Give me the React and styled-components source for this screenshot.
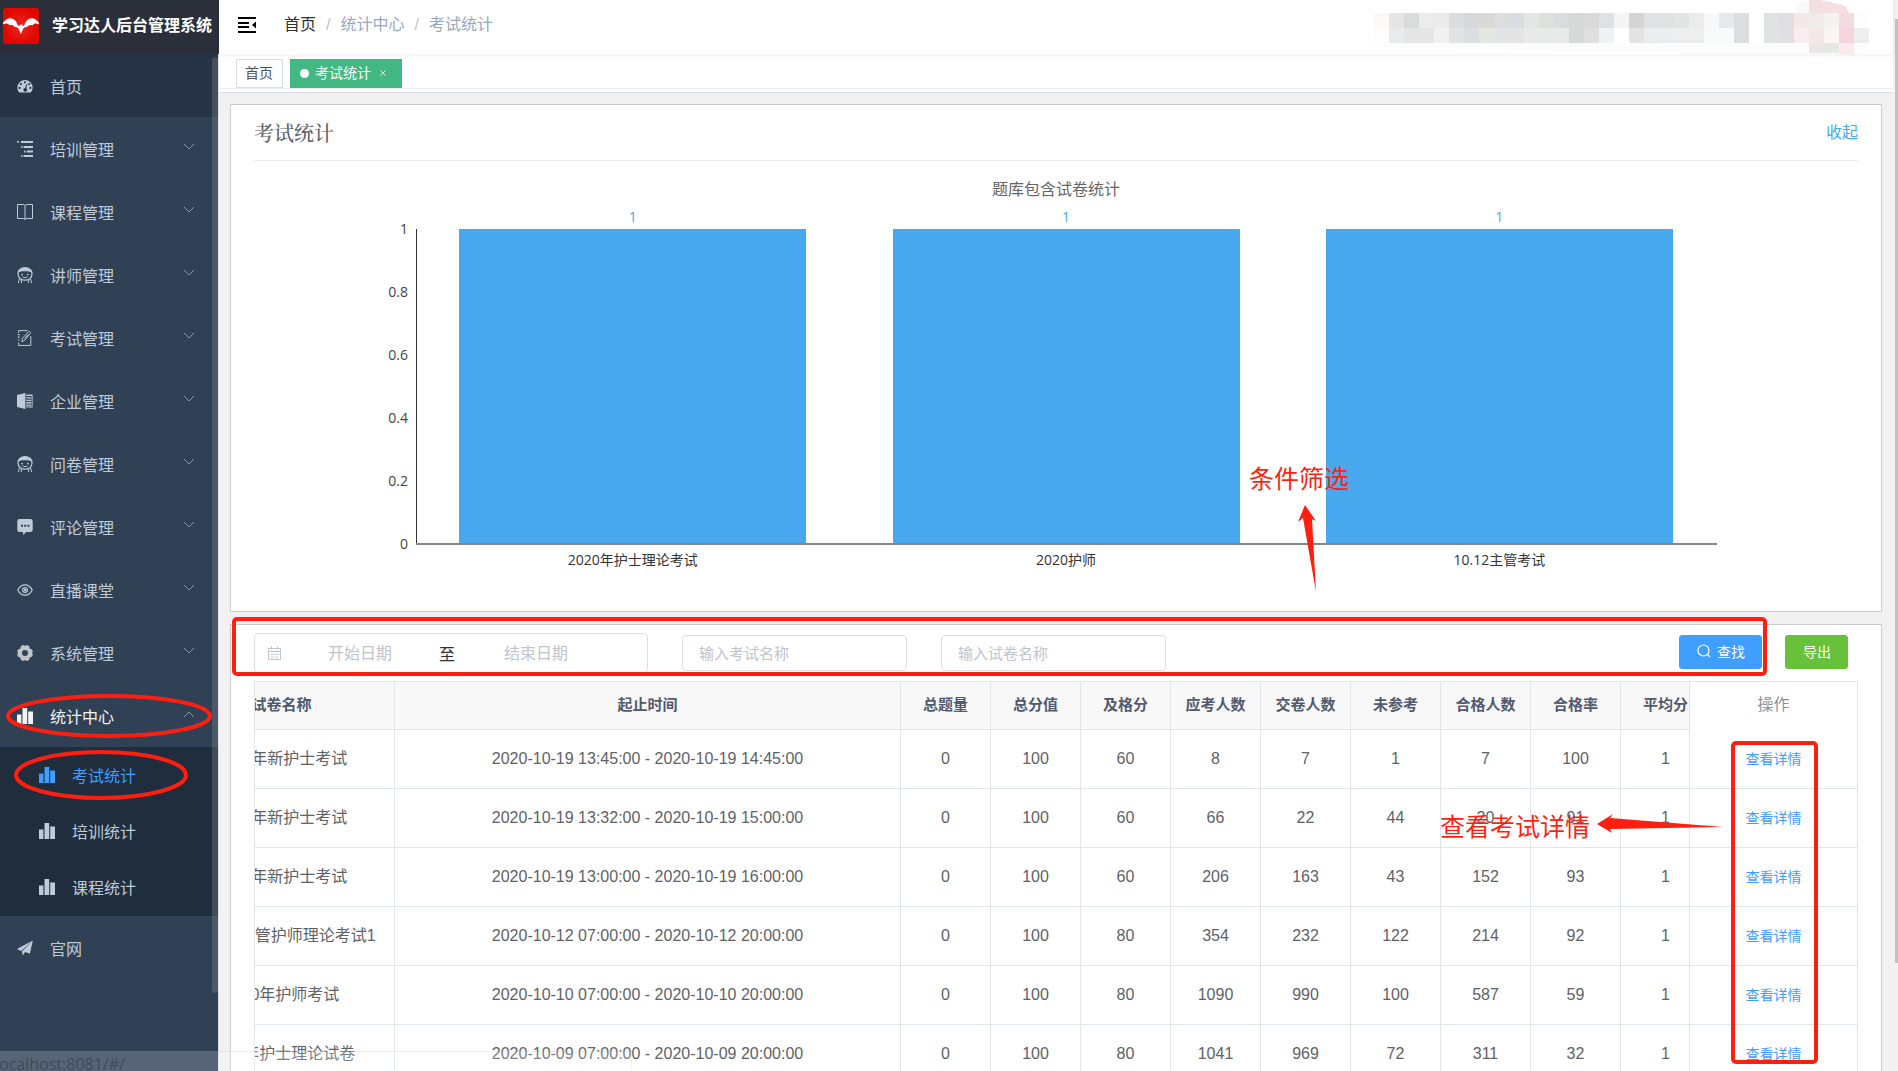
import React, { useLayoutEffect, useRef, useState } from 'react';
import styled, { createGlobalStyle, css } from 'styled-components';

// Global styles
const GlobalStyle = createGlobalStyle`
    * {
        box-sizing: border-box;
    }

    body {
        margin: 0;
        overflow: hidden;
        font-family: 'Liberation Sans', 'Noto Sans CJK SC', sans-serif;
        font-size: 16px;
        color: #606266;
    }

    button, input {
        font-family: inherit;
    }

    a {
        text-decoration: none;
    }
`;

/* --- Layout --- */
const Shell = styled.div`
    position: relative;
    display: flex;
    height: 100vh;
    overflow: hidden;
    background: #f1f1f1;
`;

const Sidebar = styled.aside`
    display: flex;
    flex-direction: column;
    flex: 0 0 219px;
`;

const Main = styled.main`
    flex: 1;
    min-width: 0;
`;

const PageScroll = styled.div`
    flex: 0 0 5px;
    padding: 19px 0 0 2px;
    background: #f1f1f1;
`;

const PageThumb = styled.div`
    height: calc(100% - 108px);
    background: #c1c1c1;
`;

/* --- Sidebar --- */
const Brand = styled.a`
    display: flex;
    align-items: center;
    gap: 13px;
    height: 54px;
    padding: 0 0 3px 3px;
    background: #2b2f3a;
    color: #fff;
    font-size: 16px;
    font-weight: 700;
    line-height: 16px;
    white-space: nowrap;
`;

const Menu = styled.nav`
    position: relative;
    flex: 1;
    min-height: 0;
    overflow: hidden;
    border-right: 1px solid #e0e0e0;
    background: #304156;
`;

const MenuThumb = styled.div`
    position: absolute;
    top: 3px;
    right: 0;
    width: 6px;
    height: 92%;
    border-radius: 3px;
    background: rgba(144, 147, 153, 0.3);
`;

const itemStyle = css`
    display: flex;
    align-items: center;
    gap: 17px;
    width: 100%;
    height: 63px;
    padding: 0 23px 0 17px;
    border: none;
    background: ${props => (props.$dark ? '#263445' : 'transparent')};
    color: ${props => (props.$open ? '#f4f4f5' : '#bfcbd9')};
    font-size: 16px;
    text-align: left;
    cursor: pointer;
`;

const MenuLink = styled.a`
    ${itemStyle}
`;

const MenuButton = styled.button`
    ${itemStyle}
`;

const MenuText = styled.span`
    flex: 1;
`;

const SubMenu = styled.div`
    padding-bottom: 1px;
    background: #1f2d3d;
`;

const SubLink = styled.a`
    display: flex;
    align-items: center;
    gap: 17px;
    height: 56px;
    padding-left: 39px;
    color: ${props => (props.$active ? '#409eff' : '#bfcbd9')};
    font-size: 16px;
`;

/* --- Navbar --- */
const Navbar = styled.header`
    position: relative;
    display: flex;
    align-items: center;
    height: 54px;
    padding: 0 22px 4px 19px;
    background: #fff;
    box-shadow: 0 1px 4px rgba(0, 21, 41, 0.08);
`;

const FoldButton = styled.button`
    display: flex;
    padding: 0;
    border: none;
    background: none;
    cursor: pointer;
`;

const Breadcrumb = styled.nav`
    display: flex;
    align-items: center;
    flex: 1;
    gap: 10px;
    margin-left: 28px;
    font-size: 16px;
    line-height: 18px;
    color: #97a8be;
`;

const CrumbLink = styled.a`
    color: #303133;
`;

const Slash = styled.span`
    color: #c0c4cc;
`;

const UserArea = styled.div`
    display: flex;
    align-self: flex-start;
`;

/* --- Tags --- */
const TagsWrap = styled.div`
    padding-bottom: 3px;
    border-bottom: 1px solid #d8dce5;
    background: #fff;
`;

const Tags = styled.div`
    display: flex;
    gap: 7px;
    height: 35px;
    padding: 5px 17px 0;
    border-bottom: 1px solid #eee;
`;

const Tag = styled.a`
    display: flex;
    align-items: center;
    gap: 6px;
    height: 29px;
    padding: ${props => (props.$active ? '0 14px 1px 9px' : '0 9px 1px 8px')};
    border: 1px solid ${props => (props.$active ? '#42b983' : '#d8dce5')};
    background: ${props => (props.$active ? '#42b983' : '#fff')};
    color: ${props => (props.$active ? '#fff' : '#495060')};
    font-size: 14px;
    line-height: 14px;
`;

const Dot = styled.span`
    width: 9px;
    height: 9px;
    border-radius: 50%;
    background: #fff;
`;

const TagClose = styled.span`
    display: flex;
    margin-left: 2px;
`;

/* --- Cards --- */
const Content = styled.div`
    display: flex;
    flex-direction: column;
    gap: 12px;
    padding: 11px;
`;

const Card = styled.section`
    padding: 0 23px;
    border: 1px solid #ccc;
    background: #fff;
`;

const CardHeader = styled.div`
    display: flex;
    align-items: center;
    justify-content: space-between;
    height: 56px;
    border-bottom: 1px solid #ebebeb;
`;

const CardTitle = styled.h2`
    margin: 0;
    font-family: 'Liberation Serif', 'Noto Serif CJK SC', 'Noto Sans CJK SC', serif;
    font-size: 20px;
    font-weight: 500;
    color: #606266;
`;

const TextButton = styled.button`
    padding: 0;
    border: none;
    background: none;
    color: #48a8ee;
    font-size: 16px;
    line-height: 16px;
    cursor: pointer;
`;

const ChartSvg = styled.svg`
    display: block;
    width: 100%;
    font-family: 'Open Sans', 'Noto Sans CJK SC', sans-serif;
    font-size: 14px;
`;

/* --- Filters --- */
const Filters = styled.form`
    display: flex;
    align-items: center;
    height: 56px;
    padding-right: 10px;
`;

const DateRange = styled.div`
    display: flex;
    align-items: center;
    width: 394px;
    height: 40px;
    padding-left: 12px;
    border: 1px solid #dcdfe6;
    border-radius: 4px;
`;

const DateInput = styled.input`
    width: 154px;
    height: 38px;
    padding: 2px 0 0 2px;
    border: none;
    outline: none;
    background: none;
    font-size: 16px;
    text-align: center;

    &::placeholder {
        color: #c0c4cc;
    }
`;

const RangeSeparator = styled.span`
    width: 22px;
    color: #303133;
    font-size: 16px;
    text-align: center;
`;

const TextInput = styled.input`
    width: 225px;
    height: 36px;
    margin-left: 34px;
    padding: 0 16px;
    border: 1px solid #dcdfe6;
    border-radius: 4px;
    outline: none;
    font-size: 15px;

    &::placeholder {
        color: #c0c4cc;
    }
`;

const Actions = styled.div`
    display: flex;
    gap: 23px;
    margin-left: auto;
`;

const Button = styled.button`
    display: flex;
    align-items: center;
    gap: 6px;
    height: 34px;
    margin-bottom: 2px;
    padding: 0 16px 2px 17px;
    border: 1px solid ${props => props.$color};
    border-radius: 3px;
    background: ${props => props.$color};
    color: #fff;
    font-size: 14px;
    cursor: pointer;
`;

/* --- Table --- */
const TableWrap = styled.div`
    display: flex;
    margin-bottom: 20px;
    border-top: 1px solid #dfe6ec;
    border-left: 1px solid #dfe6ec;
`;

const TableScroll = styled.div`
    flex: 1;
    min-width: 0;
    overflow: hidden;
`;

const Table = styled.table`
    width: ${props => props.$width}px;
    table-layout: fixed;
    border-collapse: separate;
    border-spacing: 0;
    text-align: center;
`;

const FixedTable = styled(Table)`
    border-left: 1px solid #dfe6ec;
`;

const Th = styled.th`
    height: 48px;
    padding: 0 0 2px;
    border-right: 1px solid #dfe6ec;
    border-bottom: 1px solid #dfe6ec;
    background: #f8f8f9;
    color: #515a6e;
    font-size: 15px;
    font-weight: 700;
    line-height: 20px;
`;

const FixedTh = styled(Th)`
    border-bottom-color: #fff;
    background: #fff;
    color: #909399;
    font-size: 16px;
    font-weight: 400;
`;

const Td = styled.td`
    height: 59px;
    padding: 0;
    border-right: 1px solid #dfe6ec;
    border-bottom: 1px solid #dfe6ec;
    color: #606266;
    font-size: 16px;
    line-height: 20px;
    white-space: nowrap;
`;

const DetailLink = styled.a`
    color: #409eff;
    font-size: 14px;
`;

/* --- Overlays --- */
const Marks = styled.svg`
    position: absolute;
    inset: 0;
    width: 100%;
    height: 100%;
    pointer-events: none;
    font-size: 25px;
`;

const StatusBubble = styled.div`
    position: absolute;
    left: 0;
    bottom: -8px;
    width: 632px;
    height: 28px;
    border-top: 1px solid rgba(120, 130, 140, 0.12);
    border-right: 1px solid rgba(120, 130, 140, 0.08);
    background: rgba(255, 255, 255, 0.19);
    color: #3f4b5c;
    font-family: 'Open Sans', sans-serif;
    font-size: 16px;
    line-height: 24px;
    text-indent: -5px;
    pointer-events: none;
`;

/* --- Iconos --- */
const Svg = ({ size = 16, children, ...rest }) => (
    <svg width={size} height={size} viewBox="0 0 16 16" fill="currentColor" aria-hidden="true" {...rest}>
        {children}
    </svg>
);

const DashboardIcon = () => (
    <Svg>
        <path
            fillRule="evenodd"
            d="M8 2a7.6 7.6 0 0 0-7.6 7.6c0 1.7.5 3.2 1.4 4.4.2.3.4.4.7.4h11c.3 0 .5-.1.7-.4a7.5 7.5 0 0 0 1.4-4.4A7.6 7.6 0 0 0 8 2Zm0 1.2a1.1 1.1 0 1 1 0 2.2 1.1 1.1 0 0 1 0-2.2ZM3.9 5a1.1 1.1 0 1 1 0 2.2A1.1 1.1 0 0 1 3.9 5Zm8.2 0a1.1 1.1 0 1 1 0 2.2 1.1 1.1 0 0 1 0-2.2ZM2.6 8.800a1.1 1.1 0 1 1 0 2.2 1.1 1.1 0 0 1 0-2.2Zm10.800 0a1.1 1.1 0 1 1 0 2.2 1.1 1.1 0 0 1 0-2.2ZM9.300 6.300l.9.3-.9 3.6a1.9 1.9 0 1 1-1.1-.3Z"
        />
    </Svg>
);

const TreeIcon = () => (
    <Svg>
        <path d="M0 0h2v1.600H0zM4 0h12v2H4zM4 5.200h1.600v1.600H4zM6.600 5h9.400v2H6.600zM7 9.800h1.600v1.600H7zM9.800 9.600H16v2H9.800zM4 14.200h1.600v1.600H4zM6.600 14H16v2H6.600z" />
    </Svg>
);

const BookIcon = () => (
    <Svg fill="none" stroke="currentColor" strokeWidth="1">
        <path d="M.5.500h5.700c1 0 1.800.6 1.800 1.400 0-.8.8-1.400 1.800-1.400h5.700v14H9.800c-1 0-1.800.4-1.800 1.100 0-.7-.8-1.100-1.800-1.100H.5ZM8 2v13.500" />
    </Svg>
);

const PeopleIcon = () => (
    <Svg fill="none" stroke="currentColor">
        <path d="M1 6.600C1 3 4 .6 8 .6s7 2.400 7 6c0 4.200-3 6.600-7 6.600S1 10.800 1 6.600Z" strokeWidth="1.200" />
        <path d="M1 5.800C1.600 2.600 4.400.8 8 .8s6.400 1.800 7 5c-1.600-1.100-4-1.500-7-1.500s-5.400.4-7 1.500Z" fill="currentColor" stroke="none" />
        <path d="M5.300 9.800c1.500 1 3.900 1 5.400 0M2.400 11.800 1.400 16M4.400 13v3M13.600 11.800l1 4.200M11.600 13v3" />
        <circle cx="5" cy="7.600" r=".9" fill="currentColor" stroke="none" />
        <circle cx="11" cy="7.600" r=".9" fill="currentColor" stroke="none" />
    </Svg>
);

const ExamIcon = () => (
    <Svg fill="none" stroke="currentColor">
        <path d="M1.600 3V.6h9M1.600 12.600v2.800h12.200V6" />
        <path d="M.8 4.600h1.800M.8 7.200h1.800M.8 10h1.800" strokeWidth="1.200" />
        <path d="m5.400 8.400 6-6.700c.8-.9 2.700.6 1.900 1.700l-5.600 7-2.800 1.300ZM7.600 8.600l3.700-4.200" />
    </Svg>
);

const CompanyIcon = () => (
    <Svg>
        <path d="M0 2 8.400 0v16L0 14ZM9.200 1.600h6.400v1.500H9.200zM14.600 1.600h1v12.800h-1zM9.200 4.300h4.800v1.300H9.200zM9.200 6.700h4.800V8H9.200zM9.200 9.100h4.800v1.300H9.200zM9.200 11.500h4.800v1.200H9.200zM9.200 13.400h6.400v1H9.200z" />
    </Svg>
);

const MessageIcon = () => (
    <Svg>
        <path
            fillRule="evenodd"
            d="M2.500 0h11A2.200 2.200 0 0 1 15.700 2.200v8.600a2.200 2.200 0 0 1-2.200 2.200H9.200L6.300 16l-.5-3H2.500A2.200 2.200 0 0 1 .3 10.800V2.200A2.200 2.200 0 0 1 2.500 0Zm1.500 5.700v2h2v-2Zm3.200 0v2h2v-2Zm3.200 0v2h2v-2Z"
        />
    </Svg>
);

const EyeIcon = () => (
    <Svg fill="none" stroke="currentColor" strokeWidth="1.200">
        <path d="M.8 8C2.600 4.400 5 2.800 8 2.800S13.400 4.400 15.200 8C13.400 11.600 11 13.200 8 13.200S2.600 11.600.8 8Z" />
        <circle cx="8" cy="8" r="2.400" />
        <circle cx="8" cy="8" r=".6" />
    </Svg>
);

const GearIcon = () => (
    <Svg>
        <path
            fill="#c0c4cc"
            fillRule="evenodd"
            d="M5.300.3h1.800L8 1.200l.9-.9h1.800l1.500.9.5 2.400 2.200.8 1 1.900-.9 1.700.9 1.800-1 2-2.200.7-.5 2.300-1.500.9H8.900L8 14.800l-.9.9H5.300l-1.500-.9-.5-2.300-2.200-.7-1-2L1 8 .1 6.300l1-1.900 2.200-.8.5-2.400ZM8 5a3 3 0 1 0 0 6 3 3 0 0 0 0-6Z"
        />
    </Svg>
);

const ChartIcon = () => (
    <Svg>
        <path d="M0 6.600h4.400V16H0zM5.500 0h4.700v16H5.500zM11.200 3.400H16V16h-4.800z" />
    </Svg>
);

const PlaneIcon = () => (
    <Svg>
        <path d="M15.800.6 0 8.900l4 2ZM15.800.6 4.900 11.400l.9 4.200 2-3ZM15.800.6 7.600 11.700l5.300 2Z" />
    </Svg>
);

const Chevron = ({ up }) => (
    <svg width="12" height="18" viewBox="0 0 12 18" fill="none" stroke="#8a95a3" aria-hidden="true">
        <path d={up ? 'M1 10l5-5 5 5' : 'M1 4l5 5 5-5'} />
    </svg>
);

const BatLogo = () => (
    <svg width="36" height="36" viewBox="0 0 36 36" aria-hidden="true">
        <defs>
            <radialGradient id="bat">
                <stop offset="0" stopColor="#e8281e" />
                <stop offset="1" stopColor="#e10600" />
            </radialGradient>
        </defs>
        <rect width="36" height="36" rx="3" fill="url(#bat)" />
        <path
            fill="#fff"
            d="M0 15c2-3 5-5 8-4.600 4 .4 5.600 3.600 6.500 6.600.5 1 1.200 1.300 1.800 1l.6-2 .6 1h1l.6-1 .6 2c.6.3 1.300 0 1.800-1 .9-3 2.500-6.200 6.500-6.600 3-.4 6 1.600 8 4.600v1.500c-2-1.300-5-1.300-6.500.7-2.200-.6-4.500 0-5.500 1.800-2-.2-3.300.6-4 2.200L17.800 26l-2-4.800c-.7-1.600-2-2.400-4-2.200-1-1.800-3.100-2.400-5.300-1.800C5 15.200 2 15.200 0 16.500Z"
        />
    </svg>
);

const FoldIcon = () => (
    <svg width="18" height="16" viewBox="0 0 18 16" fill="#000" aria-hidden="true">
        <path d="M0 0h18v2H0zM0 5h11v2H0zM0 9h11v2H0zM0 14h18v2H0zM18 4.500v7L14 8z" />
    </svg>
);

const CalendarIcon = () => (
    <svg width="15" height="15" viewBox="0 0 15 15" fill="none" stroke="#c0c4cc" aria-hidden="true">
        <path d="M1.500 2.500h12v11h-12zM1.500 5.500h12M4.500.500v3M10.500.500v3M4 8.500h2M6.800 8.500h2M9.500 8.500h2M4 11h2M6.800 11h2M9.500 11h2" />
    </svg>
);

const SearchIcon = () => (
    <svg width="14" height="14" viewBox="0 0 14 14" fill="none" stroke="#fff" strokeWidth="1.200" aria-hidden="true">
        <circle cx="6.500" cy="6.500" r="5.500" />
        <path d="m10.500 10.500 2.500 2.500" />
    </svg>
);

/* --- Datos --- */
const menuItems = [
    { name: '培训管理', Icon: TreeIcon },
    { name: '课程管理', Icon: BookIcon },
    { name: '讲师管理', Icon: PeopleIcon },
    { name: '考试管理', Icon: ExamIcon },
    { name: '企业管理', Icon: CompanyIcon },
    { name: '问卷管理', Icon: PeopleIcon },
    { name: '评论管理', Icon: MessageIcon },
    { name: '直播课堂', Icon: EyeIcon },
    { name: '系统管理', Icon: GearIcon },
    { name: '统计中心', Icon: ChartIcon, children: ['考试统计', '培训统计', '课程统计'] },
];

const columns = [
    { title: '试卷名称', width: 226 },
    { title: '起止时间', width: 506 },
    { title: '总题量', width: 90 },
    { title: '总分值', width: 90 },
    { title: '及格分', width: 90 },
    { title: '应考人数', width: 90 },
    { title: '交卷人数', width: 90 },
    { title: '未参考', width: 90 },
    { title: '合格人数', width: 90 },
    { title: '合格率', width: 90 },
    { title: '平均分', width: 90 },
];

const rows = [
    ['2020年新护士考试', '2020-10-19 13:45:00 - 2020-10-19 14:45:00', 0, 100, 60, 8, 7, 1, 7, 100, 1],
    ['2020年新护士考试', '2020-10-19 13:32:00 - 2020-10-19 15:00:00', 0, 100, 60, 66, 22, 44, 20, 91, 1],
    ['2020年新护士考试', '2020-10-19 13:00:00 - 2020-10-19 16:00:00', 0, 100, 60, 206, 163, 43, 152, 93, 1],
    ['2020年主管护师理论考试1', '2020-10-12 07:00:00 - 2020-10-12 20:00:00', 0, 100, 80, 354, 232, 122, 214, 92, 1],
    ['2020年护师考试', '2020-10-10 07:00:00 - 2020-10-10 20:00:00', 0, 100, 80, 1090, 990, 100, 587, 59, 1],
    ['2020年护士理论试卷', '2020-10-09 07:00:00 - 2020-10-09 20:00:00', 0, 100, 80, 1041, 969, 72, 311, 32, 1],
];

const chartData = [
    { name: '2020年护士理论考试', value: 1 },
    { name: '2020护师', value: 1 },
    { name: '10.12主管考试', value: 1 },
];

// masked user name and avatar, 15px blocks
const maskTop = 'fbf8f8 e4e6e5 dadcdb ececec ebebe9 dbdcde d8d8d8 d9d9da dddddd dbdce0 e4e6e5 dfe0dd dadbdf d8d8d8 dadada e0e1e3 f5f5f5 d5d5d5 e0e1e3 e1e1e3 e3e5e4 ececea f8f8f8 e8e9eb dcdde0 ffffff e0e1e3 dfdfe1 f3e7e8 f2ece9 f6f2f0 f3dcdf fdfdfd'.split(' ');
const maskBottom = 'fdfdfd e9eaec e5e5e5 e5e5e5 f3f1ef e1e2e4 dcdde0 e5e6e2 e3e4e7 e4e4e4 e9e9e9 e8eae9 e6eae8 d7d9d8 dfdfdf f0f1f4 ffffff e3e3e3 ebecee ecedef eeeeef eeeeeb f8faf9 f8faf9 dcdde0 ffffff e1e2e4 e0e0e2 fbedef f4e8e6 fbf6f4 f5d5dc eeeeee'.split(' ');

const MaskedUser = () => (
    <svg width="505" height="55" viewBox="0 0 505 55" shapeRendering="crispEdges" aria-hidden="true">
        <path d="M0 43h505l-12 11H340L120 49 8 47Z" fill="#fcfcfc" />
        <path d="M428 13c3-8 8-12 16-13h20v13Z" fill="#faf8f8" />
        <path d="M443 0h10l15 4v9h-25Z" fill="#f2dfdf" />
        <path d="M453 0l20 4c6 1 9 5 10 9h-25Z" fill="#f5dfe0" />
        {maskTop.map((c, i) => <rect key={i} x={8 + i * 15} y="13" width="15" height="15" fill={`#${c}`} />)}
        {maskBottom.map((c, i) => <rect key={i} x={8 + i * 15} y="28" width="15" height="15" fill={`#${c}`} />)}
        <rect x="443" y="43" width="15" height="10" fill="#ece5e7" />
        <rect x="458" y="43" width="15" height="10" fill="#e6e8e6" />
        <rect x="473" y="43" width="15" height="12" fill="#faebef" />
    </svg>
);

/* --- BarChart --- */
function BarChart() {
    const left = 162;
    const top = 68;
    const plotWidth = 1300;
    const plotHeight = 315;
    const step = plotWidth / chartData.length;
    const barWidth = step * 0.8;

    return (
        <ChartSvg viewBox="0 0 1604 450">
            <text x="802" y="34" fontSize="16" fill="#666" textAnchor="middle">题库包含试卷统计</text>
            {[0, 0.2, 0.4, 0.6, 0.8, 1].map(tick => (
                <text key={tick} x="154" y={top + 5 + (1 - tick) * plotHeight} fill="#444" textAnchor="end">{tick}</text>
            ))}
            {chartData.map((item, i) => {
                const center = left + step * (i + 0.5);
                const height = plotHeight * item.value;
                return (
                    <g key={item.name}>
                        <rect
                            x={Math.round(center - barWidth / 2)}
                            y={top + plotHeight - height}
                            width={Math.round(barWidth)}
                            height={height}
                            fill="#48a8ee"
                        />
                        <text x={center} y={top + plotHeight - height - 7} fill="#48a8ee" textAnchor="middle">{item.value}</text>
                        <text x={center} y={top + plotHeight + 21} fill="#333" textAnchor="middle">{item.name}</text>
                    </g>
                );
            })}
            <rect x="162" y={top} width="1" height={plotHeight + 1} fill="#333" />
            <rect x="162" y={top + plotHeight - 1} width={plotWidth + 1} height="2" fill="#858585" />
        </ChartSvg>
    );
}

/* --- SideMenu --- */
function SideMenu() {
    const [open, setOpen] = useState('统计中心');

    return (
        <Sidebar>
            <Brand href="#/">
                <BatLogo />
                学习达人后台管理系统
            </Brand>
            <Menu>
                <MenuLink href="#/" $dark>
                    <DashboardIcon />
                    <MenuText>首页</MenuText>
                </MenuLink>
                {menuItems.map(({ name, Icon, children }) => (
                    <React.Fragment key={name}>
                        <MenuButton
                            type="button"
                            $open={open === name}
                            onClick={() => setOpen(open === name ? '' : name)}
                        >
                            <Icon />
                            <MenuText>{name}</MenuText>
                            <Chevron up={open === name} />
                        </MenuButton>
                        {children && open === name && (
                            <SubMenu>
                                {children.map((child, i) => (
                                    <SubLink key={child} href="#/" $active={i === 0}>
                                        <ChartIcon />
                                        {child}
                                    </SubLink>
                                ))}
                            </SubMenu>
                        )}
                    </React.Fragment>
                ))}
                <MenuLink href="#/">
                    <PlaneIcon />
                    <MenuText>官网</MenuText>
                </MenuLink>
                <MenuThumb />
            </Menu>
        </Sidebar>
    );
}

/* --- ExamTable --- */
function ExamTable() {
    const scrollRef = useRef(null);
    const total = columns.reduce((sum, col) => sum + col.width, 0);

    useLayoutEffect(() => {
        scrollRef.current.scrollLeft = 86;
    }, []);

    return (
        <TableWrap>
            <TableScroll ref={scrollRef}>
                <Table $width={total}>
                    <colgroup>
                        {columns.map(col => <col key={col.title} width={col.width} />)}
                    </colgroup>
                    <thead>
                        <tr>
                            {columns.map(col => <Th key={col.title} scope="col">{col.title}</Th>)}
                        </tr>
                    </thead>
                    <tbody>
                        {rows.map((row, i) => (
                            <tr key={i}>
                                {row.map((cell, j) => <Td key={j}>{cell}</Td>)}
                            </tr>
                        ))}
                    </tbody>
                </Table>
            </TableScroll>
            <FixedTable $width={169}>
                <thead>
                    <tr>
                        <FixedTh scope="col">操作</FixedTh>
                    </tr>
                </thead>
                <tbody>
                    {rows.map((row, i) => (
                        <tr key={i}>
                            <Td><DetailLink href="#/">查看详情</DetailLink></Td>
                        </tr>
                    ))}
                </tbody>
            </FixedTable>
        </TableWrap>
    );
}

/* --- Annotations drawn over the page --- */
function Annotations() {
    return (
        <Marks>
            <g fill="none" stroke="#ff1f10" strokeWidth="4">
                <ellipse cx="109" cy="716" rx="101" ry="20" />
                <ellipse cx="101" cy="775" rx="85" ry="23" />
                <rect x="234" y="619" width="1531" height="55" rx="3" />
                <rect x="1733" y="743" width="83" height="319" rx="3" />
            </g>
            <g fill="#ff1f10">
                <path d="M1305 505l11 16-4-2 4 73-13-74-5 4Z" />
                <path d="M1597 824l16-10-3 4 113 9-113 2 2 4Z" />
                <text x="1249" y="488">条件筛选</text>
                <text x="1440" y="836">查看考试详情</text>
            </g>
        </Marks>
    );
}

export default function App() {
    return (
        <>
            <GlobalStyle />
            <Shell>
                <SideMenu />
                <Main>
                    <Navbar>
                        <FoldButton type="button" aria-label="折叠菜单">
                            <FoldIcon />
                        </FoldButton>
                        <Breadcrumb>
                            <CrumbLink href="#/">首页</CrumbLink>
                            <Slash>/</Slash>
                            <span>统计中心</span>
                            <Slash>/</Slash>
                            <span>考试统计</span>
                        </Breadcrumb>
                        <UserArea>
                            <MaskedUser />
                        </UserArea>
                    </Navbar>
                    <TagsWrap>
                        <Tags>
                            <Tag href="#/">首页</Tag>
                            <Tag href="#/" $active>
                                <Dot />
                                考试统计
                                <TagClose>
                                    <svg width="8" height="8" viewBox="0 0 8 8" stroke="#fff" aria-hidden="true">
                                        <path d="M1.500 1.500l5 5M6.500 1.500l-5 5" />
                                    </svg>
                                </TagClose>
                            </Tag>
                        </Tags>
                    </TagsWrap>
                    <Content>
                        <Card>
                            <CardHeader>
                                <CardTitle>考试统计</CardTitle>
                                <TextButton type="button">收起</TextButton>
                            </CardHeader>
                            <BarChart />
                        </Card>
                        <Card>
                            <Filters onSubmit={e => e.preventDefault()}>
                                <DateRange>
                                    <CalendarIcon />
                                    <DateInput placeholder="开始日期" aria-label="开始日期" />
                                    <RangeSeparator>至</RangeSeparator>
                                    <DateInput placeholder="结束日期" aria-label="结束日期" />
                                </DateRange>
                                <TextInput placeholder="输入考试名称" aria-label="考试名称" />
                                <TextInput placeholder="输入试卷名称" aria-label="试卷名称" />
                                <Actions>
                                    <Button type="submit" $color="#409eff">
                                        <SearchIcon />
                                        查找
                                    </Button>
                                    <Button type="button" $color="#67c23a">导出</Button>
                                </Actions>
                            </Filters>
                            <ExamTable />
                        </Card>
                    </Content>
                </Main>
                <PageScroll>
                    <PageThumb />
                </PageScroll>
                <StatusBubble>localhost:8081/#/</StatusBubble>
                <Annotations />
            </Shell>
        </>
    );
}
